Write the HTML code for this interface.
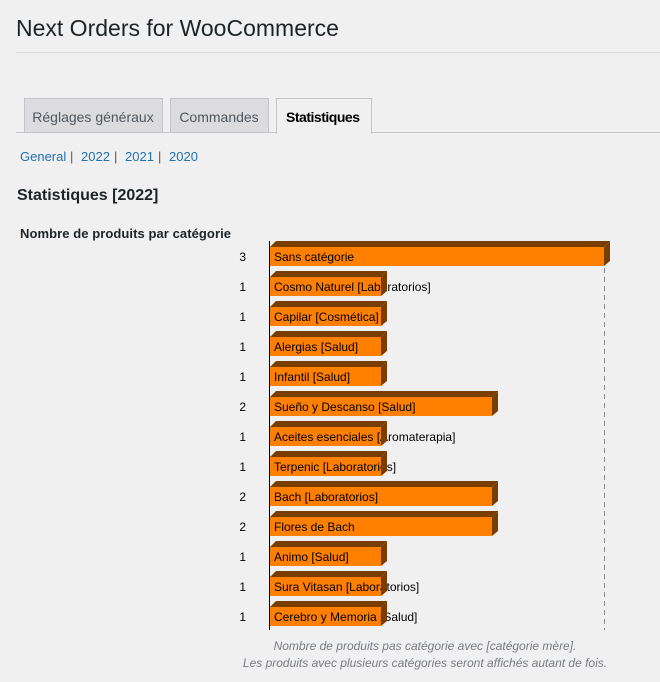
<!DOCTYPE html>
<html><head><meta charset="utf-8"><style>
html,body{margin:0;padding:0;background:#f0f0f1;width:660px;height:682px;overflow:hidden}
svg{position:absolute;left:0;top:0}
</style></head><body>
<svg width="660" height="682" xmlns="http://www.w3.org/2000/svg" font-family="Liberation Sans, Arial, sans-serif">
<text x="16" y="36" font-size="23" fill="#1d2327">Next Orders for WooCommerce</text>
<rect x="16" y="52" width="644" height="1" fill="#dcdcde"/>
<rect x="16" y="132" width="644" height="1" fill="#c3c4c7"/>
<rect x="24.5" y="98.5" width="138" height="34" fill="#dcdcde" stroke="#c3c4c7"/>
<rect x="170.5" y="98.5" width="98" height="34" fill="#dcdcde" stroke="#c3c4c7"/>
<rect x="276.5" y="98.5" width="95" height="35" fill="#f0f0f1" stroke="#c3c4c7"/>
<rect x="277" y="132" width="94" height="2" fill="#f0f0f1"/>
<text x="93" y="122" font-size="14" fill="#50575e" text-anchor="middle">Réglages généraux</text>
<text x="219" y="122" font-size="14" fill="#50575e" text-anchor="middle">Commandes</text>
<text x="323" y="122" font-size="14" font-weight="bold" fill="#000" text-anchor="middle" textLength="74">Statistiques</text>
<g font-size="13" fill="#2271b1">
<text x="20" y="161">General</text><text x="70" y="161" fill="#50575e">|</text>
<text x="81" y="161">2022</text><text x="114" y="161" fill="#50575e">|</text>
<text x="125" y="161">2021</text><text x="158" y="161" fill="#50575e">|</text>
<text x="169" y="161">2020</text>
</g>
<text x="17" y="200" font-size="16" font-weight="bold" fill="#1d2327">Statistiques [2022]</text>
<text x="20" y="238" font-size="13" font-weight="bold" fill="#1d2327" textLength="211">Nombre de produits par catégorie</text>
<line x1="604.5" y1="241" x2="604.5" y2="630" stroke="#888" stroke-dasharray="5,4"/>
<line x1="269.5" y1="241" x2="269.5" y2="630" stroke="#000"/>
<g font-size="12">
<text x="246" y="261" text-anchor="end">3</text><polygon points="270,247 276,241 610,241 604,247" fill="#7a3d00"/><rect x="270" y="247" width="334" height="19" fill="#ff8000"/><text x="274" y="261">Sans catégorie</text><polygon points="604,247 610,241 610,261 604,266" fill="#7a3d00"/>
<text x="246" y="291" text-anchor="end">1</text><polygon points="270,277 276,271 387,271 381,277" fill="#7a3d00"/><rect x="270" y="277" width="111" height="19" fill="#ff8000"/><text x="274" y="291">Cosmo Naturel [Laboratorios]</text><polygon points="381,277 387,271 387,291 381,296" fill="#7a3d00"/>
<text x="246" y="321" text-anchor="end">1</text><polygon points="270,307 276,301 387,301 381,307" fill="#7a3d00"/><rect x="270" y="307" width="111" height="19" fill="#ff8000"/><text x="274" y="321">Capilar [Cosmética]</text><polygon points="381,307 387,301 387,321 381,326" fill="#7a3d00"/>
<text x="246" y="351" text-anchor="end">1</text><polygon points="270,337 276,331 387,331 381,337" fill="#7a3d00"/><rect x="270" y="337" width="111" height="19" fill="#ff8000"/><text x="274" y="351">Alergias [Salud]</text><polygon points="381,337 387,331 387,351 381,356" fill="#7a3d00"/>
<text x="246" y="381" text-anchor="end">1</text><polygon points="270,367 276,361 387,361 381,367" fill="#7a3d00"/><rect x="270" y="367" width="111" height="19" fill="#ff8000"/><text x="274" y="381">Infantil [Salud]</text><polygon points="381,367 387,361 387,381 381,386" fill="#7a3d00"/>
<text x="246" y="411" text-anchor="end">2</text><polygon points="270,397 276,391 498,391 492,397" fill="#7a3d00"/><rect x="270" y="397" width="222" height="19" fill="#ff8000"/><text x="274" y="411">Sueño y Descanso [Salud]</text><polygon points="492,397 498,391 498,411 492,416" fill="#7a3d00"/>
<text x="246" y="441" text-anchor="end">1</text><polygon points="270,427 276,421 387,421 381,427" fill="#7a3d00"/><rect x="270" y="427" width="111" height="19" fill="#ff8000"/><text x="274" y="441">Aceites esenciales [Aromaterapia]</text><polygon points="381,427 387,421 387,441 381,446" fill="#7a3d00"/>
<text x="246" y="471" text-anchor="end">1</text><polygon points="270,457 276,451 387,451 381,457" fill="#7a3d00"/><rect x="270" y="457" width="111" height="19" fill="#ff8000"/><text x="274" y="471">Terpenic [Laboratorios]</text><polygon points="381,457 387,451 387,471 381,476" fill="#7a3d00"/>
<text x="246" y="501" text-anchor="end">2</text><polygon points="270,487 276,481 498,481 492,487" fill="#7a3d00"/><rect x="270" y="487" width="222" height="19" fill="#ff8000"/><text x="274" y="501">Bach [Laboratorios]</text><polygon points="492,487 498,481 498,501 492,506" fill="#7a3d00"/>
<text x="246" y="531" text-anchor="end">2</text><polygon points="270,517 276,511 498,511 492,517" fill="#7a3d00"/><rect x="270" y="517" width="222" height="19" fill="#ff8000"/><text x="274" y="531">Flores de Bach</text><polygon points="492,517 498,511 498,531 492,536" fill="#7a3d00"/>
<text x="246" y="561" text-anchor="end">1</text><polygon points="270,547 276,541 387,541 381,547" fill="#7a3d00"/><rect x="270" y="547" width="111" height="19" fill="#ff8000"/><text x="274" y="561">Animo [Salud]</text><polygon points="381,547 387,541 387,561 381,566" fill="#7a3d00"/>
<text x="246" y="591" text-anchor="end">1</text><polygon points="270,577 276,571 387,571 381,577" fill="#7a3d00"/><rect x="270" y="577" width="111" height="19" fill="#ff8000"/><text x="274" y="591">Sura Vitasan [Laboratorios]</text><polygon points="381,577 387,571 387,591 381,596" fill="#7a3d00"/>
<text x="246" y="621" text-anchor="end">1</text><polygon points="270,607 276,601 387,601 381,607" fill="#7a3d00"/><rect x="270" y="607" width="111" height="19" fill="#ff8000"/><text x="274" y="621">Cerebro y Memoria [Salud]</text><polygon points="381,607 387,601 387,621 381,626" fill="#7a3d00"/>
</g>
<text x="425" y="650" font-size="12" font-style="italic" fill="#787c82" text-anchor="middle">Nombre de produits pas catégorie avec [catégorie mère].</text>
<text x="425" y="667" font-size="12" font-style="italic" fill="#787c82" text-anchor="middle">Les produits avec plusieurs catégories seront affichés autant de fois.</text>
</svg>
</body></html>
